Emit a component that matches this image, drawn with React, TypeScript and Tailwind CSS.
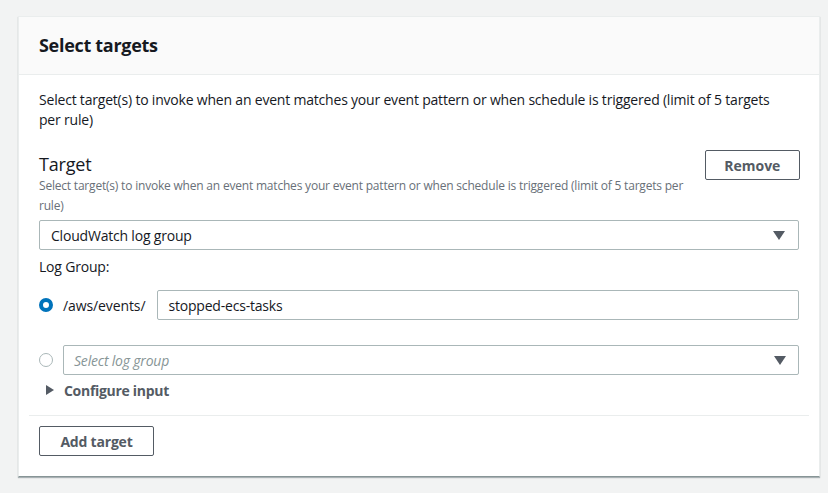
import { useState } from 'react'

function Caret() {
  return (
    <svg width="12" height="9" viewBox="0 0 12 9" className="shrink-0">
      <path d="M0 0 H12 L6 9 Z" fill="#545b64" />
    </svg>
  )
}

export default function App() {
  const [choice, setChoice] = useState<'fixed' | 'select'>('fixed')

  return (
    <div
      className="min-h-[493px] w-full bg-[#f2f3f3] pt-4 pl-[18px] pb-4 text-[#16191f]"
      style={{ fontFamily: '"Open Sans", "Noto Sans", Arial, sans-serif' }}
    >
      <div className="w-[802px] bg-white border border-[#eaeded] border-b-[#879596] shadow-[0_1px_1px_0_rgba(0,28,36,0.3)]">
        {/* header */}
        <div className="h-[58px] bg-[#fafafa] border-b border-[#eaeded] px-5 flex items-center">
          <h2 className="text-[18px] font-bold leading-6 tracking-[-0.3px] -mt-[2px]">Select targets</h2>
        </div>

        {/* body */}
        <div className="px-5 pt-[15px]">
          <p className="text-[14px] leading-5 tracking-[-0.2px] pr-[22px]">
            Select target(s) to invoke when an event matches your event pattern or when schedule is
            triggered (limit of 5 targets per rule)
          </p>

          <div className="mt-[22px] flex items-start justify-between">
            <div className="w-[670px]">
              <div className="text-[18px] leading-6 tracking-[-0.2px]">Target</div>
              <div className="text-[12px] leading-5 tracking-[-0.2px] text-[#687078]">
                Select target(s) to invoke when an event matches your event pattern or when schedule is
                triggered (limit of 5 targets per rule)
              </div>
            </div>
            <button className="mt-[-2px] mr-[-1px] h-[30px] w-[96px] rounded-[2px] border border-[#545b64] text-[14px] font-bold text-[#545b64] bg-white">
              Remove
            </button>
          </div>

          <div className="mt-[4px] h-[30px] w-[760px] rounded-[2px] border border-[#aab7b8] flex items-center justify-between pl-[11px] pr-[13px] text-[14px] tracking-[-0.2px]">
            <span>CloudWatch log group</span>
            <Caret />
          </div>

          <div className="mt-[7px] text-[14px] leading-5 tracking-[-0.2px]">Log Group:</div>

          <div className="mt-[13px] flex items-center w-[760px]">
            <button
              onClick={() => setChoice('fixed')}
              className={
                choice === 'fixed'
                  ? 'h-[14px] w-[14px] rounded-full border-[4px] border-[#0073bb] bg-white shrink-0'
                  : 'h-[14px] w-[14px] rounded-full border border-[#aab7b8] bg-white shrink-0'
              }
            />
            <span className="ml-[10px] text-[14px] tracking-[-0.1px]">/aws/events/</span>
            <div className="ml-[12px] flex-1 h-[30px] rounded-[2px] border border-[#aab7b8] flex items-center pl-[10px] text-[14px] tracking-[-0.2px]">
              stopped-ecs-tasks
            </div>
          </div>

          <div className="mt-[25px] flex items-center w-[760px]">
            <button
              onClick={() => setChoice('select')}
              className={
                choice === 'select'
                  ? 'h-[14px] w-[14px] rounded-full border-[4px] border-[#0073bb] bg-white shrink-0'
                  : 'h-[14px] w-[14px] rounded-full border border-[#aab7b8] bg-white shrink-0'
              }
            />
            <div className="ml-[10px] flex-1 h-[30px] rounded-[2px] border border-[#aab7b8] flex items-center justify-between pl-[10px] pr-[12px] text-[14px] tracking-[-0.2px]">
              <span className="italic text-[#879596]">Select log group</span>
              <Caret />
            </div>
          </div>

          <div className="mt-[5px] flex items-center pl-[7px] h-5">
            <svg width="8" height="10" viewBox="0 0 8 10">
              <path d="M0 0 L8 5 L0 10 Z" fill="#545b64" />
            </svg>
            <span className="ml-[10px] text-[14px] font-bold tracking-[-0.3px] text-[#545b64]">Configure input</span>
          </div>
        </div>

        <div className="mx-[10px] mt-[15px] border-t border-[#eaeded]" />

        <div className="px-5 pt-[10px] pb-5">
          <button className="h-[30px] w-[115px] rounded-[2px] border border-[#545b64] text-[14px] font-bold tracking-[-0.2px] text-[#545b64] bg-white">
            Add target
          </button>
        </div>
      </div>
    </div>
  )
}
